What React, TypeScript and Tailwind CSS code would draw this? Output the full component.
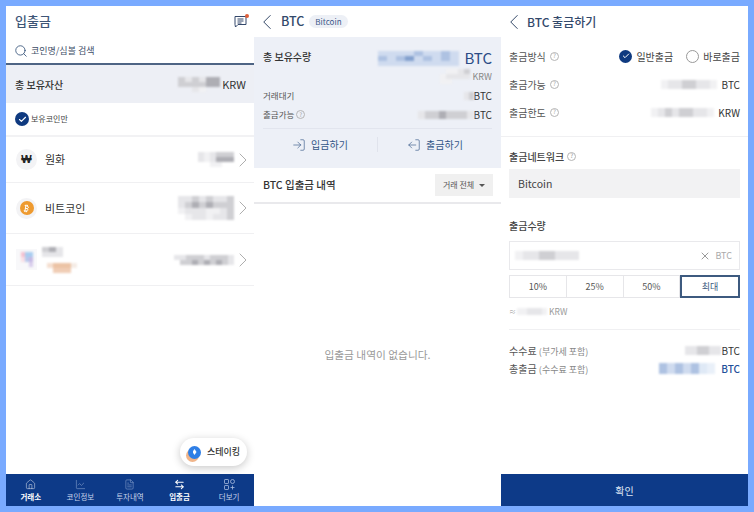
import React from "react";
import { ChevronLeft, ChevronRight, Search, Check, X, House, ChartLine, FileText, ArrowLeftRight, Bitcoin, LogIn, LogOut } from "lucide-react";

const font = { fontFamily: '"Noto Sans CJK KR","Noto Sans",sans-serif' };

function Mosaic({ rows, cell = 7, h = 7 }: { rows: string[][]; cell?: number; h?: number }) {
  return (
    <div className="flex flex-col blur-[1px] shrink-0">
      {rows.map((r, i) => (
        <div key={i} className="flex justify-end">
          {r.map((c, j) => (
            <span key={j} style={{ width: cell, height: h, background: c }} />
          ))}
        </div>
      ))}
    </div>
  );
}

const g1 = "#e6e6e9", g2 = "#cfcfd3", g3 = "#aeaeb4", g0 = "#f1f1f3", t = "transparent";
const b1 = "#cfdbef", b2 = "#aec2e2", b3 = "#84a1ce";

function Q() {
  return (
    <span className="inline-flex items-center justify-center w-[9px] h-[9px] rounded-full border border-[#b5b5b5] text-[6px] leading-none text-[#a0a0a0]">?</span>
  );
}

function CheckDot({ size = 14 }: { size?: number }) {
  return (
    <span className="inline-flex items-center justify-center rounded-full bg-[#0f3a80] text-white shrink-0" style={{ width: size, height: size }}>
      <Check size={size - 5} strokeWidth={3} />
    </span>
  );
}

function NavItem({ icon, label, active }: { icon: React.ReactNode; label: string; active?: boolean }) {
  return (
    <div className={`flex-1 flex flex-col items-center gap-[2px] ${active ? "text-white font-bold" : "text-[#a9bde0]"}`}>
      {icon}
      <span className={`text-[7.5px] leading-[10px] ${active ? "text-white" : "text-[#c6d3ea]"}`}>{label}</span>
    </div>
  );
}

function Chev() {
  return <ChevronRight size={24} strokeWidth={0.8} className="text-[#999] -ml-[3px] -mr-[9px] shrink-0" />;
}

function CoinRow({ icon, label, h, value }: { icon: React.ReactNode; label: React.ReactNode; h: string; value: React.ReactNode }) {
  return (
    <div className={`flex items-center pl-[10px] pr-[8px] ${h} border-b border-[#f0f0f2]`}>
      <div className="w-[21px] h-[21px] rounded-full bg-[#f3f3f5] flex items-center justify-center shrink-0">{icon}</div>
      <div className="ml-[8px] text-[11px] text-[#333]">{label}</div>
      <div className="ml-auto flex items-center">
        {value}
        <Chev />
      </div>
    </div>
  );
}

function Left() {
  return (
    <div className="w-[248px] bg-white flex flex-col shrink-0">
      <div className="h-[30px] flex items-center justify-between pl-[9px] pr-[6px]">
        <span className="text-[13px] font-medium text-[#3e5677]">입출금</span>
        <span className="relative">
          <svg width="14" height="13" viewBox="0 0 14 13" fill="none" stroke="#33476a" strokeWidth="1">
            <path d="M1 1.5h11v8H4l-2.5 2.5L1 9.5z" />
            <path d="M3.5 4h6M3.5 6h6M3.5 8h4" />
          </svg>
          <span className="absolute -top-[1px] -right-[1px] w-[4px] h-[4px] rounded-full bg-[#e0603a]" />
        </span>
      </div>
      <div className="h-[29px] flex items-center pl-[8px] pt-[2px] gap-[3px] border-b-2 border-[#4e6484]">
        <Search size={14} strokeWidth={1.4} className="text-[#2f4d75]" />
        <span className="text-[9px] text-[#3c4d66]">코인명/심볼 검색</span>
      </div>
      <div className="h-[38px] bg-[#edeff5] flex items-center justify-between pl-[9px] pr-[8px]">
        <span className="text-[10px] font-medium text-[#333]">총 보유자산</span>
        <div className="flex items-center gap-[2px]">
          <Mosaic cell={7} h={5} rows={[[g2, g1, g2, g1, g3, g3], [g2, g2, g2, g2, g3, g3], [t, t, g1, g0, t, t]]} />
          <span className="text-[11px] text-[#333]">KRW</span>
        </div>
      </div>
      <div className="h-[34px] flex items-center pl-[9px] gap-[2px] border-b-2 border-[#f2f2f4]">
        <CheckDot />
        <span className="text-[8px] text-[#444]">보유코인만</span>
      </div>
      <CoinRow h="h-[46px]" icon={<span className="text-[11px] font-bold text-[#222]" style={{ fontFamily: '"Liberation Sans",sans-serif' }}>₩</span>} label="원화"
        value={<Mosaic cell={6} h={5} rows={[[g1, g0, g1, g2, g2, g2], [g1, g0, g1, g3, g3, g3], [t, t, g0, g0, t, t]]} />} />
      <CoinRow h="h-[51px]" icon={<span className="w-[14px] h-[14px] rounded-full bg-[#ee9a2f] flex items-center justify-center"><Bitcoin size={9} strokeWidth={2.5} className="text-white" /></span>} label="비트코인"
        value={<Mosaic cell={7} h={6} rows={[[g1, g1, g2, g1, g2, g1, g1, g2], [g1, g2, g3, g2, g3, g2, g2, g2], [g0, g1, g1, g1, g0, g0, g1, g2], [t, g0, g1, g1, g0, g1, g1, g2]]} />} />
      <div className="h-[52px] flex items-center pl-[10px] pr-[8px] border-b border-[#f0f0f2]">
        <div className="w-[21px] h-[21px] bg-[#f8f8fa] flex items-center justify-center">
          <Mosaic cell={4} h={5} rows={[["#f5c2d0", "#a9cdf0", "#a9cdf0"], ["#f9e0e6", "#b8c8ec", "#c5b9e4"], [t, t, "#d8cdec"]]} />
        </div>
        <div className="ml-[5px] flex flex-col gap-[6px] items-start">
          <Mosaic cell={7} h={5} rows={[[g2, g3, g1], [g1, g1, g1]]} />
          <div className="ml-[5px]">
            <Mosaic cell={6} h={5} rows={[["#f5dfd0", "#ecc3a5", "#ecc3a5", "#ecc3a5", "#f5ece5"], [t, "#f0cdb5", "#f0cdb5", "#f0cdb5", t]]} />
          </div>
        </div>
        <div className="ml-auto flex items-center">
          <Mosaic cell={6} h={5} rows={[[g1, g1, g2, g2, g2, g1, g2, g2, g2, g1], [t, g2, g2, g3, g2, g3, g2, g3, g2, g1]]} />
          <Chev />
        </div>
      </div>
      <div className="flex-1 relative">
        <div className="absolute right-[7px] bottom-[8px] w-[67px] h-[28px] rounded-full bg-white shadow-[0_2px_8px_rgba(0,0,0,0.22)] flex items-center pl-[8px] gap-[6px]">
          <span className="w-[13px] h-[13px] rounded-full bg-[#2f7fe6] flex items-center justify-center shrink-0 shadow-[-2px_3px_0_#f0b58a]">
            <span className="w-[4px] h-[6px] bg-white [clip-path:polygon(50%_0,100%_50%,50%_100%,0_50%)]" />
          </span>
          <span className="text-[9px] font-medium text-[#333] whitespace-nowrap">스테이킹</span>
        </div>
      </div>
      <div className="h-[32px] bg-[#0d3a88] flex items-center">
        <NavItem icon={<House size={11} strokeWidth={1} />} label="거래소" active />
        <NavItem icon={<ChartLine size={11} strokeWidth={1} />} label="코인정보" />
        <NavItem icon={<FileText size={11} strokeWidth={1} />} label="투자내역" />
        <NavItem icon={<ArrowLeftRight size={11} strokeWidth={2.2} />} label="입출금" active />
        <NavItem
          icon={
            <svg width="11" height="11" viewBox="0 0 11 11" fill="none" stroke="currentColor" strokeWidth="0.8">
              <rect x="0.5" y="0.5" width="4" height="4" rx="0.6" />
              <circle cx="8.5" cy="2.5" r="2" />
              <rect x="0.5" y="6.5" width="4" height="4" rx="0.6" />
              <path d="M8.5 6.5v4M6.5 8.5h4" />
            </svg>
          }
          label="더보기"
        />
      </div>
    </div>
  );
}

function Middle() {
  return (
    <div className="w-[247px] bg-white flex flex-col shrink-0">
      <div className="h-[31px] flex items-center">
        <ChevronLeft size={26} strokeWidth={0.9} className="text-[#2f4464] shrink-0" />
        <span className="ml-[1px] text-[12.5px] font-medium text-[#33496b]">BTC</span>
        <span className="ml-[5px] h-[13px] px-[6px] rounded-full bg-[#edf0f6] text-[8px] leading-[13px] text-[#40598a]">Bitcoin</span>
      </div>
      <div className="h-[131px] bg-[#edf0f7] flex flex-col px-[9px]">
        <div className="flex justify-between pt-[13px] h-[49px]">
          <span className="text-[10px] font-medium text-[#333] leading-[14px]">총 보유수량</span>
          <div className="flex flex-col items-end">
            <div className="flex items-center gap-[5px] h-[16px]">
              <Mosaic cell={9} h={5} rows={[[b1, b1, b1, b1, b2, b1, b1, b2, b1], [b2, b1, b2, b3, b1, b2, b1, b2, b1], [b1, b1, b1, b1, b1, b1, b1, b1, b1]]} />
              <span className="text-[15px] leading-[16px] text-[#2c4c86]">BTC</span>
            </div>
            <div className="flex items-center gap-[3px] mt-[3px]">
              <Mosaic cell={6} h={5} rows={[[t, g0, g0, g1, g2], [g0, g1, g1, g1, g1], [g0, g0, t, t, t]]} />
              <span className="text-[9px] leading-[11px] text-[#888]">KRW</span>
            </div>
          </div>
        </div>
        <div className="flex justify-between items-center h-[19px]">
          <span className="text-[8.5px] text-[#555]">거래대기</span>
          <div className="flex items-center">
            <Mosaic cell={5} h={8} rows={[[g1, g2]]} />
            <span className="text-[10px] text-[#333]">BTC</span>
          </div>
        </div>
        <div className="flex justify-between items-center h-[19px]">
          <span className="text-[8.5px] text-[#555] flex items-center gap-[2px]">출금가능 <Q /></span>
          <div className="flex items-center">
            <Mosaic cell={7} h={8} rows={[[g1, g2, g2, g3, g2, g2, g2, g1]]} />
            <span className="text-[10px] text-[#333]">BTC</span>
          </div>
        </div>
        <div className="h-[32px] mt-[4px] border-t border-[#e2e5ee] flex items-center">
          <div className="flex-1 flex items-center justify-center gap-[5px] border-r border-[#e0e3ec] h-[15px] text-[#335687]">
            <LogIn size={14} strokeWidth={1.1} />
            <span className="text-[10px]">입금하기</span>
          </div>
          <div className="flex-1 flex items-center justify-center gap-[5px] h-[15px] text-[#335687]">
            <LogOut size={14} strokeWidth={1.1} className="rotate-180" />
            <span className="text-[10px]">출금하기</span>
          </div>
        </div>
      </div>
      <div className="h-[36px] flex items-center justify-between pl-[9px] pr-[8px] border-b-2 border-[#e9e9ec]">
        <span className="text-[10.5px] font-medium text-[#333]">BTC 입출금 내역</span>
        <div className="w-[58px] h-[22px] bg-[#f0f0f0] flex items-center justify-center gap-[5px]">
          <span className="text-[8px] text-[#555]">거래 전체</span>
          <span className="w-0 h-0 border-x-[3px] border-x-transparent border-t-[3px] border-t-[#555]" />
        </div>
      </div>
      <div className="flex-1 flex items-center justify-center text-[10.7px] text-[#999]">입출금 내역이 없습니다.</div>
    </div>
  );
}

function InfoRow({ label, children }: { label: string; children: React.ReactNode }) {
  return (
    <div className="h-[28px] flex items-center justify-between">
      <span className="text-[10px] text-[#555] flex items-center gap-[4px]">{label} <Q /></span>
      {children}
    </div>
  );
}

function Right() {
  return (
    <div className="w-[247px] bg-white flex flex-col shrink-0">
      <div className="h-[31px] flex items-center">
        <ChevronLeft size={26} strokeWidth={0.9} className="text-[#2f4464] shrink-0" />
        <span className="text-[12px] font-medium text-[#33496b]">BTC 출금하기</span>
      </div>
      <div className="px-[8px] pt-[5px] h-[100px] border-b border-[#f0f0f2]">
        <InfoRow label="출금방식">
          <div className="flex items-center">
            <CheckDot size={13} />
            <span className="ml-[4px] text-[10px] text-[#444]">일반출금</span>
            <span className="ml-[13px] w-[13px] h-[13px] rounded-full border border-[#999]" />
            <span className="ml-[4px] text-[10px] text-[#444]">바로출금</span>
          </div>
        </InfoRow>
        <InfoRow label="출금가능">
          <div className="flex items-center gap-[5px]">
            <Mosaic cell={7} h={9} rows={[[g0, g1, g1, g2, g2, g1, g1, g0]]} />
            <span className="text-[10px] text-[#333]">BTC</span>
          </div>
        </InfoRow>
        <InfoRow label="출금한도">
          <div className="flex items-center gap-[4px]">
            <Mosaic cell={7} h={9} rows={[[g0, g1, g2, g1, g2, g2, g1, g1, g0]]} />
            <span className="text-[10px] text-[#333]">KRW</span>
          </div>
        </InfoRow>
      </div>
      <div className="px-[8px] flex flex-col">
        <div className="h-[32px] flex items-center pt-[6px] gap-[3px] text-[10px] font-medium text-[#444]">출금네트워크 <Q /></div>
        <div className="h-[29px] bg-[#f2f2f3] flex items-center pl-[9px] text-[10.5px] text-[#444]">Bitcoin</div>
        <div className="h-[43px] flex items-center pt-[11px] text-[10px] font-medium text-[#444]">출금수량</div>
        <div className="h-[29px] border border-[#e9e9ec] flex items-center pl-[5px] pr-[7px]">
          <Mosaic cell={8} h={9} rows={[[g0, g1, g1, g2, g2, g1, g1, g1]]} />
          <X size={12} strokeWidth={1.2} className="ml-auto text-[#555]" />
          <span className="ml-[4px] text-[9px] text-[#aaa]">BTC</span>
        </div>
        <div className="h-[23px] mt-[5px] flex">
          <div className="flex-1 border border-[#e6e6e9] flex items-center justify-center text-[9px] text-[#555]">10%</div>
          <div className="flex-1 border-y border-r border-[#e6e6e9] flex items-center justify-center text-[9px] text-[#555]">25%</div>
          <div className="flex-1 border-y border-r border-[#e6e6e9] flex items-center justify-center text-[9px] text-[#555]">50%</div>
          <div className="flex-1 border-2 border-[#3d5a7f] flex items-center justify-center text-[9px] text-[#3d5a7f]">최대</div>
        </div>
        <div className="h-[26px] flex items-center gap-[1px]">
          <span className="text-[7px] text-[#999]">≈</span>
          <Mosaic cell={5} h={7} rows={[[g0, g0, g1, g1, g1, g0]]} />
          <span className="text-[8.5px] text-[#999] ml-[1px]">KRW</span>
        </div>
        <div className="border-t border-[#f0f0f2] mt-[5px] pt-[12px] flex flex-col gap-[1px]">
          <div className="flex items-center justify-between h-[17px]">
            <span className="text-[10px] text-[#555]">수수료 <span className="text-[9px] text-[#888]">(부가세 포함)</span></span>
            <div className="flex items-center gap-[1px]">
              <Mosaic cell={6} h={9} rows={[[g1, g1, g2, g2, g1, g1]]} />
              <span className="text-[10px] text-[#333]">BTC</span>
            </div>
          </div>
          <div className="flex items-center justify-between h-[17px]">
            <span className="text-[10px] text-[#555]">총출금 <span className="text-[9px] text-[#888]">(수수료 포함)</span></span>
            <div className="flex items-center gap-[6px]">
              <Mosaic cell={8} h={11} rows={[[b2, b1, b2, b1, b2, "#dfe9f6", "#e9f0f9"]]} />
              <span className="text-[10px] font-medium text-[#1f4f9a]">BTC</span>
            </div>
          </div>
        </div>
      </div>
      <div className="mt-auto h-[32px] bg-[#0d3a88] flex items-center justify-center text-[10px] text-[#dfe7f5]">확인</div>
    </div>
  );
}

export default function App() {
  return (
    <div className="w-[754px] h-[512px] bg-[#79aaff] p-[6px] flex overflow-hidden" style={font}>
      <Left />
      <Middle />
      <Right />
    </div>
  );
}
